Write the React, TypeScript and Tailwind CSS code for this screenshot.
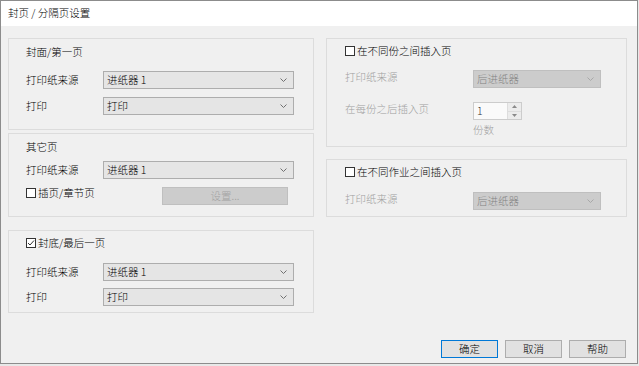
import React from "react";

const FONT = '"Noto Sans CJK SC", "Noto Sans", sans-serif';

function Chevron({ color = "#606060" }: { color?: string }) {
  return (
    <svg width="7" height="4" viewBox="0 0 7 4" className="shrink-0">
      <polyline points="0.5,0.5 3.5,3.5 6.5,0.5" fill="none" stroke={color} strokeWidth="1" />
    </svg>
  );
}

function Select({ text, w, disabled = false }: { text: string; w: string; disabled?: boolean }) {
  return (
    <div
      className={
        "h-[18px] border flex items-center justify-between pl-[3px] pr-[6px] " +
        w +
        (disabled ? " bg-[#cccccc] border-[#bfbfbf] text-[#838383]" : " bg-[#e5e5e5] border-[#adadad] text-black")
      }
    >
      <span className="leading-none">{text}</span>
      <Chevron color={disabled ? "#a8a8a8" : "#707070"} />
    </div>
  );
}

function CheckBox({ checked = false, label }: { checked?: boolean; label: string }) {
  return (
    <div className="flex items-center h-[16px]">
      <div className="w-[10px] h-[10px] border border-[#333333] bg-white flex items-center justify-center shrink-0">
        {checked && (
          <svg width="8" height="8" viewBox="0 0 8 8">
            <polyline points="1,4 3,6 7,1.5" fill="none" stroke="#333" strokeWidth="1" />
          </svg>
        )}
      </div>
      <span className="ml-[2px] leading-none">{label}</span>
    </div>
  );
}

function Btn({ text, def = false }: { text: string; def?: boolean }) {
  return (
    <div
      className={
        "w-[57px] h-[18px] flex items-center justify-center bg-[#e1e1e1] border leading-none " +
        (def ? "border-[#0078d7]" : "border-[#adadad]")
      }
    >
      {text}
    </div>
  );
}

export default function App() {
  return (
    <div className="w-[639px] h-[366px] bg-[#e8e8e8] text-[10.5px] font-light text-black" style={{ fontFamily: FONT }}>
      <div className="w-[638px] h-[364px] border border-[#8c8c8c] flex flex-col bg-[#f0f0f0]">
        <div className="h-[25px] bg-white flex items-center pl-[7px] shrink-0">
          <span className="leading-none">封页 / 分隔页设置</span>
        </div>
        <div className="flex-1 flex flex-col pl-[7px] pr-[10px] pt-[12px] pb-[5px]">
          <div className="flex gap-[12px]">
            {/* Left column */}
            <div className="w-[306px] flex flex-col">
              <div className="h-[92px] border border-[#dcdcdc] flex flex-col pl-[17px] pt-[5px]">
                <div className="h-[16px] flex items-center leading-none">封面/第一页</div>
                <div className="flex items-center mt-[11px]">
                  <div className="w-[77px] leading-none">打印纸来源</div>
                  <Select text="进纸器 1" w="w-[191px]" />
                </div>
                <div className="flex items-center mt-[8px]">
                  <div className="w-[77px] leading-none">打印</div>
                  <Select text="打印" w="w-[191px]" />
                </div>
              </div>
              <div className="mt-[3px] h-[84px] border border-[#dcdcdc] flex flex-col pl-[17px] pt-[5px]">
                <div className="h-[16px] flex items-center leading-none">其它页</div>
                <div className="flex items-center mt-[6px]">
                  <div className="w-[77px] leading-none">打印纸来源</div>
                  <Select text="进纸器 1" w="w-[191px]" />
                </div>
                <div className="flex items-start mt-[8px]">
                  <div className="-mt-[2px] w-[136px]">
                    <CheckBox label="插页/章节页" />
                  </div>
                  <div className="w-[126px] h-[18px] bg-[#cccccc] border border-[#bfbfbf] text-[#a3a3a3] flex items-center justify-center leading-none">
                    设置...
                  </div>
                </div>
              </div>
              <div className="mt-[13px] h-[83px] border border-[#dcdcdc] flex flex-col pl-[17px] pt-[4px]">
                <CheckBox checked label="封底/最后一页" />
                <div className="flex items-center mt-[12px]">
                  <div className="w-[77px] leading-none">打印纸来源</div>
                  <Select text="进纸器 1" w="w-[191px]" />
                </div>
                <div className="flex items-center mt-[7px]">
                  <div className="w-[77px] leading-none">打印</div>
                  <Select text="打印" w="w-[191px]" />
                </div>
              </div>
            </div>
            {/* Right column */}
            <div className="w-[301px] flex flex-col">
              <div className="h-[109px] border border-[#dcdcdc] flex flex-col pl-[18px] pt-[4px]">
                <CheckBox label="在不同份之间插入页" />
                <div className="flex items-start mt-[11px]">
                  <div className="w-[128px] leading-[12px] mt-[1px] text-[#a0a0a0]">打印纸来源</div>
                  <Select text="后进纸器" w="w-[128px]" disabled />
                </div>
                <div className="flex items-start mt-[14px]">
                  <div className="w-[128px] leading-[12px] mt-[1px] text-[#a0a0a0]">在每份之后插入页</div>
                  <div className="flex flex-col">
                    <div className="w-[49px] h-[18px] border border-[#cccccc] bg-[#fafafa] flex">
                      <div className="flex-1 flex items-center pl-[3px] leading-none text-[#333]">1</div>
                      <div className="w-[14px] flex flex-col border-l border-[#dddddd]">
                        <div className="flex-1 bg-[#ececec] flex items-center justify-center border-b border-[#dddddd]">
                          <svg width="5" height="3" viewBox="0 0 5 3"><polygon points="2.5,0 5,3 0,3" fill="#8a8a8a" /></svg>
                        </div>
                        <div className="flex-1 bg-[#ececec] flex items-center justify-center">
                          <svg width="5" height="3" viewBox="0 0 5 3"><polygon points="0,0 5,0 2.5,3" fill="#8a8a8a" /></svg>
                        </div>
                      </div>
                    </div>
                    <div className="mt-[4px] leading-[12px] text-[#a0a0a0]">份数</div>
                  </div>
                </div>
              </div>
              <div className="mt-[12px] h-[58px] border border-[#dcdcdc] flex flex-col pl-[18px] pt-[4px]">
                <CheckBox label="在不同作业之间插入页" />
                <div className="flex items-start mt-[12px]">
                  <div className="w-[128px] leading-[12px] mt-[1px] text-[#a0a0a0]">打印纸来源</div>
                  <Select text="后进纸器" w="w-[128px]" disabled />
                </div>
              </div>
            </div>
          </div>
          <div className="mt-auto flex justify-end gap-[7px] pr-[1px]">
            <Btn text="确定" def />
            <Btn text="取消" />
            <Btn text="帮助" />
          </div>
        </div>
      </div>
    </div>
  );
}
